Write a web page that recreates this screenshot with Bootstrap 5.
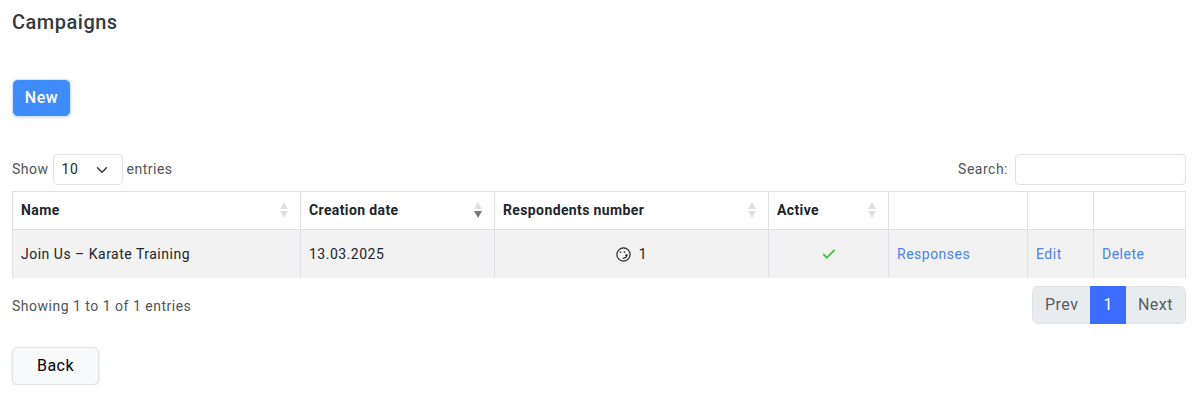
<!DOCTYPE html>
<html lang="en">
<head>
<meta charset="utf-8">
<meta name="viewport" content="width=device-width, initial-scale=1">
<title>Campaigns</title>
<link href="https://cdn.jsdelivr.net/npm/bootstrap@5.3.0/dist/css/bootstrap.min.css" rel="stylesheet">
<style>
body{font-family:Roboto,"Liberation Sans",sans-serif;font-size:14px;letter-spacing:.5px;color:#212529;background:#fff;overflow:hidden}
.page{padding:10px 14px 0 12px}
.page-title{font-size:20px;line-height:24px;font-weight:500;color:#343a40;margin:0 0 45px}
.btn{font-size:16px;line-height:24px;letter-spacing:.5px;box-shadow:0 1px 3px rgba(0,0,0,.13)}
.btn-new{--bs-btn-color:#fff;--bs-btn-bg:#3d8bfd;--bs-btn-border-color:#d6e6fd;font-weight:500;width:59px;height:38px;padding:6px 0;border-radius:6px}
.btn-back{--bs-btn-color:#000;--bs-btn-bg:#f8f9fa;--bs-btn-border-color:#dee2e6;width:87px;height:38px;padding:6px 0;border-radius:6px;margin-top:23px}
.toolbar{margin-top:37px}
.muted{color:#4f5458}
.len-select{width:70px;height:31px;font-size:14px;letter-spacing:.5px;padding:3px 8px;margin:0 4px;border-radius:4px;background-position:right 13px center;background-size:14px 12px;border-color:#dee2e6;color:#212529}
.search-input{width:171px;height:31px;margin-left:7px;border-radius:4px;border-color:#dee2e6}
.grid-table{table-layout:fixed;width:1174px;margin:6px 0 0;border-color:#dee2e6;border-collapse:separate;border-spacing:0;border-left:1px solid #dee2e6;--bs-table-striped-bg:#f2f2f2;color:#212529}
.grid-table>:not(caption)>*>*{border-width:0 1px 0 0;padding:8px;vertical-align:middle}
.grid-table thead th{height:39px;padding:7px 8px 9px;border-width:1px 1px 1px 0;font-weight:700;letter-spacing:.38px;line-height:20px}
.grid-table tbody td{height:48px}
.grid-table a{color:#4a83e8;text-decoration:none}
.sorter{width:8px;height:16px;margin-right:4px;flex:none}
.pager .page-link{font-size:16px;line-height:24px;padding:6px 12px;height:38px;color:#565e64;background:#e9ecef;border-color:#dee2e6;text-align:center}
.pager .page-item.active .page-link{background:#3b6cff;border-color:#3b6cff;color:#fff}
.info{padding-top:10px}
</style>
</head>
<body>
<main class="page">
  <h1 class="page-title">Campaigns</h1>
  <button type="button" class="btn btn-new d-block">New</button>

  <div class="toolbar d-flex justify-content-between muted">
    <label class="d-flex align-items-center">Show
      <select class="form-select len-select"><option>10</option><option>25</option></select>
      entries</label>
    <label class="d-flex align-items-center">Search:<input type="search" class="form-control search-input"></label>
  </div>

  <table class="table table-striped grid-table">
    <colgroup><col style="width:288px"><col style="width:194px"><col style="width:274px"><col style="width:120px"><col style="width:139px"><col style="width:66px"><col style="width:92px"></colgroup>
    <thead>
      <tr>
        <th><div class="d-flex align-items-center justify-content-between">Name<svg class="sorter" viewBox="0 0 8 16"><path fill="#dedfe0" d="M4 0l4 7H0zM4 16l4-7H0z"/></svg></div></th>
        <th><div class="d-flex align-items-center justify-content-between">Creation date<svg class="sorter" viewBox="0 0 8 16"><path fill="#dedfe0" d="M4 0l4 7H0z"/><path fill="#77797b" d="M4 16l4-7H0z"/></svg></div></th>
        <th><div class="d-flex align-items-center justify-content-between">Respondents number<svg class="sorter" viewBox="0 0 8 16"><path fill="#dedfe0" d="M4 0l4 7H0zM4 16l4-7H0z"/></svg></div></th>
        <th><div class="d-flex align-items-center justify-content-between">Active<svg class="sorter" viewBox="0 0 8 16"><path fill="#dedfe0" d="M4 0l4 7H0zM4 16l4-7H0z"/></svg></div></th>
        <th></th><th></th><th></th>
      </tr>
    </thead>
    <tbody>
      <tr>
        <td>Join Us – Karate Training</td>
        <td>13.03.2025</td>
        <td><div class="d-flex align-items-center justify-content-center gap-2"><svg width="15" height="15" viewBox="0 0 15 15" fill="none" stroke="#212529"><circle cx="7.5" cy="7.5" r="6.6" stroke-width="1.2"/><path d="M3.7 5.2h1.6M7.7 5.2h1.6" stroke-width="1.3"/><path d="M6.6 11.2c2.6.2 4.6-1.4 4.6-3.8M9.3 8.4c.9 0 1.5-.3 2-1" stroke-width="1.1"/></svg><span>1</span></div></td>
        <td><div class="d-flex justify-content-center"><svg width="14" height="12" viewBox="0 0 14 12" fill="none" stroke="#45be45" stroke-width="1.8"><path d="M1.3 6.2l3.5 3.5 7.8-7.9"/></svg></div></td>
        <td><a href="#">Responses</a></td>
        <td><a href="#">Edit</a></td>
        <td><a href="#">Delete</a></td>
      </tr>
    </tbody>
  </table>

  <div class="d-flex justify-content-between align-items-start pt-2">
    <div class="info muted">Showing 1 to 1 of 1 entries</div>
    <ul class="pagination pager mb-0">
      <li class="page-item"><a class="page-link" href="#">Prev</a></li>
      <li class="page-item active"><a class="page-link" href="#">1</a></li>
      <li class="page-item"><a class="page-link" href="#">Next</a></li>
    </ul>
  </div>

  <button type="button" class="btn btn-back d-block">Back</button>
</main>
<script src="https://cdn.jsdelivr.net/npm/bootstrap@5.3.0/dist/js/bootstrap.bundle.min.js"></script>
</body>
</html>
